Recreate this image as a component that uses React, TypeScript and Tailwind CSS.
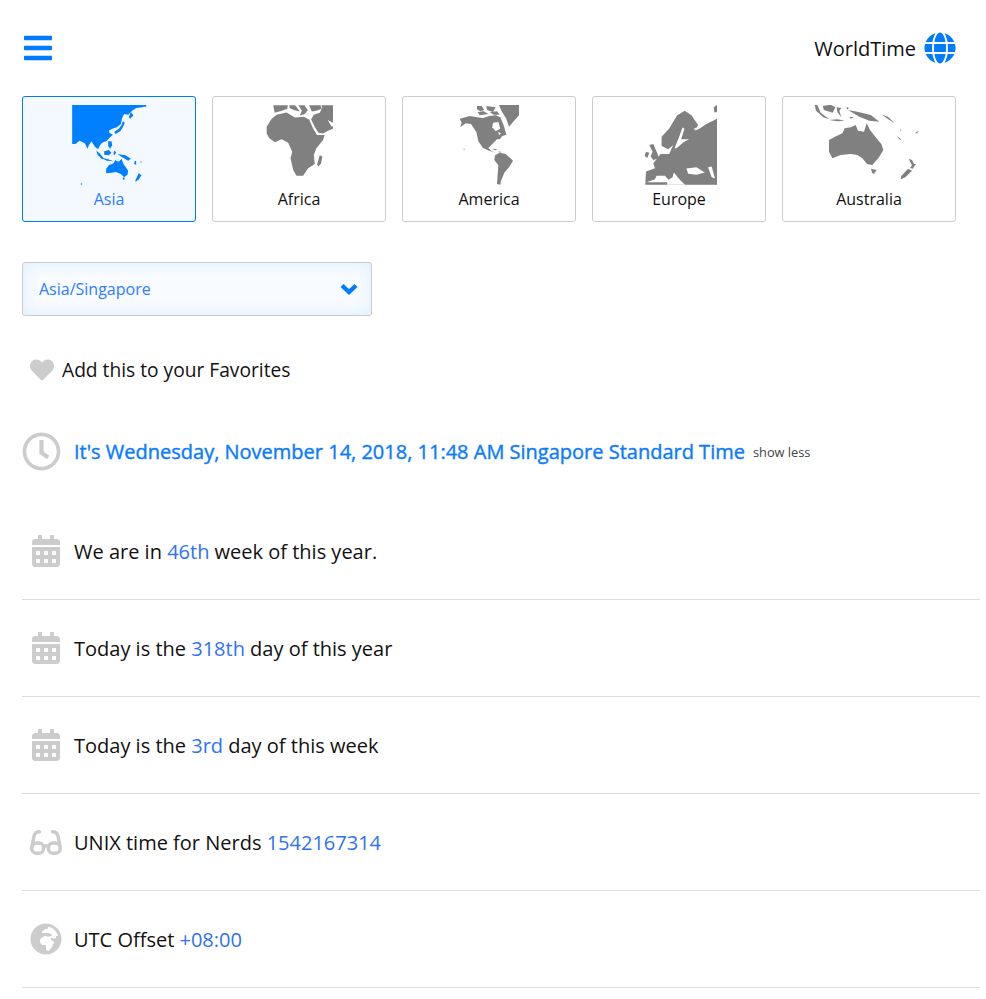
import { FaBars, FaCalendarAlt, FaGlobe, FaGlobeAfrica, FaHeart, FaRegClock } from "react-icons/fa";
import type { ReactNode } from "react";

function MapImage({ viewBox, width, color, paths }: { viewBox: string; width: number; color: string; paths: string[] }) {
  return (
    <svg viewBox={viewBox} width={width} height={80} fill={color} className="block">
      {paths.map((d, i) => (
        <path key={i} d={d} />
      ))}
    </svg>
  );
}

const asia = [
  "M216 255H438L428 262 408 264 396 272 384 284 372 282 366 294 362 312 350 322 336 326 326 332 328 338 338 344 330 352 320 362 306 368 298 378 294 388 284 380 274 364 266 376 262 386 254 370 238 362 226 372 216 372Z",
  "M392 276L400 286 390 296 386 292Z",
  "M368 304L374 308 368 322 360 334 346 342 342 336 356 326 364 316Z",
  "M318 446L326 436 340 430 346 420 354 428 364 416 370 432 384 452 382 464 372 472 362 462 348 456 334 458 318 460Z",
  "M416 460L424 466 416 478 406 486 406 480Z",
  "M288 392L298 400 312 416 306 418 292 404Z",
  "M312 394L326 390 334 398 326 406 312 404Z",
  "M324 364L334 364 336 376 330 386 324 378Z",
  "M342 392L348 396 344 406 340 402Z",
  "M352 402L376 406 392 416 384 422 366 412Z",
  "M300 412L324 418 340 424 320 422Z",
  "M344 424H360V427H344Z",
  "M368 472L374 474 372 480 368 478Z",
  "M404 422L408 424 408 434 402 432Z",
  "M420 424L426 426 422 428Z",
  "M242 490H246V494H242Z",
  "M430 255H438V260H432Z",
];

const africa = [
  "M800 320L815 296 830 284 860 277 885 292 912 290 928 298 940 325 952 345 975 345 970 360 950 385 942 405 945 432 925 445 910 468 890 468 880 450 872 415 877 395 865 368 845 358 825 367 808 355 800 340Z",
  "M820 255H864L862 266 846 272 824 278Z",
  "M868 255H886L900 274 884 270 870 264Z",
  "M896 255H914L924 270 914 282 900 286 906 272Z",
  "M928 255H962L966 266 950 272 936 274Z",
  "M934 298L942 284 960 278 968 262 964 255H1000V308L984 300 996 320 1000 318V326L985 332 970 340 956 338 946 322Z",
  "M960 406L968 410 964 430 956 440 952 434Z",
];

const america = [
  "M328 255H388V286L372 304 358 320 350 296 336 274Z",
  "M210 296L240 288 262 292 280 294 300 288 318 286 332 292 342 316 350 344 338 348 330 358 322 358 304 376 296 384 304 392 318 398 298 392 280 384 266 364 260 336 244 312 228 310 212 322 216 308Z",
  "M262 258L276 258 284 270 272 274 262 268Z",
  "M290 258L318 262 310 276 292 270Z",
  "M264 276L282 274 296 282 270 286Z",
  "M300 276L322 274 330 284 312 284Z",
  "M316 406L330 398 348 402 370 422 358 442 344 458 334 482 332 494 322 492 324 462 326 436 314 420Z",
  "M306 386L324 388 316 391Z",
  "M326 394L336 396 330 398Z",
  "M222 386H225V389H222Z",
];

const americaHoles = ["M310 308L326 306 332 326 318 334 308 322Z", "M326 336L334 340 328 346Z"];

const europe = [
  "M982 296L950 312 930 325 915 332 925 315 905 285 885 272 862 285 838 325 815 350 815 378 835 388 850 375 838 402 812 402 790 430 795 445 768 455 766 495H982Z",
  "M972 262L980 255H982V276L974 276Z",
  "M778 375L790 372 800 395 808 415 790 420 782 410 788 395Z",
  "M768 395L778 398 772 414 764 408Z",
];

const europeHoles = [
  "M878 322L868 350 854 385 860 385 882 366 898 358 874 358 884 326Z",
  "M770 487L795 478 800 468 825 468 836 480 848 472 852 458 872 482 886 495H832V487Z",
  "M890 446L920 442 945 458 920 465 895 462Z",
  "M955 442L966 440 976 476 966 472Z",
  "M912 326L920 322 916 330Z",
];

const australia = [
  "M175 360L190 352 215 340 222 325 240 322 255 315 262 332 280 335 288 310 298 330 315 352 332 372 338 390 325 412 305 435 290 433 275 415 260 405 240 402 210 405 185 415 175 395Z",
  "M301 446L318 450 310 462 304 458Z",
  "M414 416L424 420 430 432 436 432 426 446 418 444 424 436Z",
  "M412 446L424 452 404 472 390 478 392 468Z",
  "M156 258L180 254 194 262 186 278 160 270Z",
  "M132 255H140L150 278 176 298 158 292 136 272Z",
  "M198 262L212 264 206 272 212 292 200 276Z",
  "M232 270L260 275 300 285 326 305 296 302 266 290Z",
  "M176 300L200 298 222 302 200 304Z",
  "M228 262H233V268H228ZM236 290L250 292 240 296Z",
  "M334 284L352 290 372 310 356 300Z",
  "M378 348L392 358 388 360Z",
  "M432 340L444 332 440 340Z",
  "M388 326L392 332 390 334Z",
];

const regions = [
  { name: "Asia", viewBox: "216 255 224 240", width: 75, paths: asia, active: true },
  { name: "Africa", viewBox: "798 255 202 240", width: 67, paths: africa, active: false },
  { name: "America", viewBox: "208 255 180 240", width: 60, paths: america, active: false, holes: americaHoles },
  { name: "Europe", viewBox: "753 255 229 240", width: 76, paths: europe, active: false, holes: europeHoles },
  { name: "Australia", viewBox: "130 255 333 240", width: 111, paths: australia, active: false },
];

function RegionCard({ name, viewBox, width, paths, active, holes }: { name: string; viewBox: string; width: number; paths: string[]; active: boolean; holes?: string[] }) {
  return (
    <div
      className={`w-[174px] h-[126px] rounded-[3px] border flex flex-col items-center pt-2 ${
        active ? "border-[#007bff] bg-[#f3f9ff] text-[#2f7bff]" : "border-[#ccc] bg-white text-[#111]"
      }`}
    >
      <div className="relative h-[80px]">
        <MapImage viewBox={viewBox} width={width} color={active ? "#0080ff" : "#808080"} paths={paths} />
        {holes && (
          <div className="absolute inset-0">
            <MapImage viewBox={viewBox} width={width} color="#fff" paths={holes} />
          </div>
        )}
      </div>
      <span className="mt-[3px] text-base leading-[22px]">{name}</span>
    </div>
  );
}

function Glasses() {
  return (
    <svg width={32} height={25} viewBox="0 0 32 25" fill="none" stroke="#ccc" strokeWidth={3.4} strokeLinecap="round">
      <rect x="1.7" y="13" width="12" height="10.3" rx="5.1" />
      <rect x="18.3" y="13" width="12" height="10.3" rx="5.1" />
      <path d="M13.5 17C15 15.4 17 15.4 18.5 17" />
      <path d="M1.7 18L4 6C4.6 3 6.5 1.7 9.5 1.7" />
      <path d="M30.3 18L28 6C27.4 3 25.5 1.7 22.5 1.7" />
    </svg>
  );
}

function InfoRow({ icon, children }: { icon: ReactNode; children: ReactNode }) {
  return (
    <div className="h-[97px] border-b border-[#ddd] flex items-center text-[20px] text-[#111]">
      <span className="w-[52px] flex justify-center pr-[4px] text-[#ccc]">{icon}</span>
      <span className="pt-[2px]">{children}</span>
    </div>
  );
}

function Num({ children }: { children: ReactNode }) {
  return <span className="text-[#2f72f5]">{children}</span>;
}

export default function App() {
  return (
    <div className="w-[986px] h-[999px] overflow-hidden bg-white pl-[22px] pr-[6px] font-['Open_Sans',sans-serif]">
      <header className="h-[96px] flex items-center justify-between pr-[24px]">
        <FaBars className="text-[#007bff]" size={32} />
        <div className="flex items-center gap-2 text-[20px] text-[#111]">
          <span className="pt-[2px]">WorldTime</span>
          <FaGlobe className="text-[#007bff]" size={32} />
        </div>
      </header>

      <div className="flex gap-4">
        {regions.map((r) => (
          <RegionCard key={r.name} {...r} />
        ))}
      </div>

      <div className="mt-10 w-[350px] h-[54px] rounded-[3px] border border-[#ccc] bg-[#f8fbff] shadow-[inset_0_0_16px_#dcedff] flex items-center justify-between pl-4 pr-[13px] text-base text-[#2f7bff]">
        Asia/Singapore
        <svg width={18} height={12} viewBox="0 0 18 12" fill="none" stroke="#007bff" strokeWidth={4.4}>
          <path d="M2 2.5L9 9L16 2.5" />
        </svg>
      </div>

      <div className="mt-[37px] h-[34px] flex items-center text-[19.2px] text-[#111]">
        <FaHeart className="ml-2 mr-2 text-[#ccc]" size={24} />
        Add this to your Favorites
      </div>

      <div className="mt-[42px] flex items-center h-[44px]">
        <FaRegClock className="text-[#ccc]" size={39} />
        <h1 className="ml-[13px] pt-[2px] text-[20px] font-medium text-[#0a7bff] [-webkit-text-stroke:0.4px_#0a7bff]">
          It's Wednesday, November 14, 2018, 11:48 AM Singapore Standard Time
        </h1>
        <span className="ml-2 mt-[3px] text-[12.8px] text-[#444]">show less</span>
      </div>

      <div className="mt-[30px]">
        <InfoRow icon={<FaCalendarAlt size={32} />}>
          We are in <Num>46th</Num> week of this year.
        </InfoRow>
        <InfoRow icon={<FaCalendarAlt size={32} />}>
          Today is the <Num>318th</Num> day of this year
        </InfoRow>
        <InfoRow icon={<FaCalendarAlt size={32} />}>
          Today is the <Num>3rd</Num> day of this week
        </InfoRow>
        <InfoRow icon={<Glasses />}>
          UNIX time for Nerds <Num>1542167314</Num>
        </InfoRow>
        <InfoRow icon={<FaGlobeAfrica size={32} />}>
          UTC Offset <Num>+08:00</Num>
        </InfoRow>
      </div>
    </div>
  );
}
